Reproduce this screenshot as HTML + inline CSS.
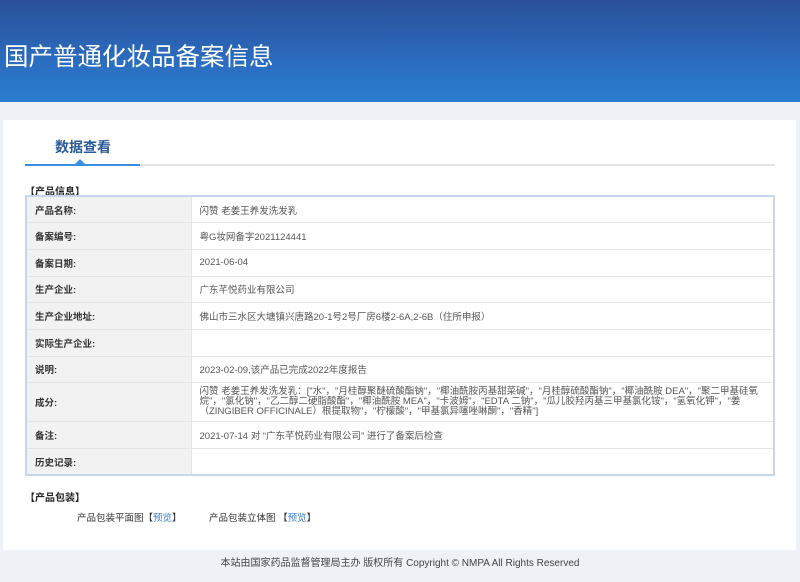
<!DOCTYPE html>
<html><head><meta charset="utf-8"><style>
*{margin:0;padding:0;box-sizing:border-box}
body{width:800px;height:582px;background:#eef2f6;font-family:"Liberation Sans","Noto Sans CJK SC",sans-serif;position:relative;overflow:hidden;color:#333}
.hd{position:absolute;left:0;top:0;width:800px;height:102px;background:linear-gradient(#2a4f97,#2b6cbf 60%,#2a7ccd);border-bottom:2px solid #2b7fd3}
.hd h1{position:absolute;left:4px;top:38px;font-size:24.5px;font-weight:normal;color:#fff}
.card{position:absolute;left:3px;top:120px;width:793px;height:430px;background:#fff}
.tab{position:absolute;left:55px;top:137px;font-size:14px;font-weight:bold;color:#2a5a9a}
.l1{position:absolute;left:25px;top:164px;width:750px;height:2px;background:#e3e3e3}
.l2{position:absolute;left:25px;top:164px;width:115px;height:2px;background:#3a8ee0}
.tri{position:absolute;left:75px;top:159px;width:0;height:0;border-left:5px solid transparent;border-right:5px solid transparent;border-bottom:5px solid #3a8ee0}
.sec{position:absolute;font-size:10px;font-weight:bold;color:#222}
table{position:absolute;left:25px;top:195px;width:750px;border-collapse:collapse;border:2px solid #c6d6ec;font-size:9.5px}
td{border-bottom:1px solid #e4e4e4;padding:0 8px;height:26.7px}
td.k{width:165px;background:#f2f2f2;font-weight:bold;color:#333;border-right:1px solid #e4e4e4}
td.v{color:#555}
.ft{position:absolute;top:554px;left:0;width:800px;text-align:center;font-size:10px;color:#444}
.pk{position:absolute;top:510px;font-size:9.5px;color:#333}
.pk a{color:#3a7fd0;text-decoration:none}
</style></head><body>
<div class="hd"><h1>国产普通化妆品备案信息</h1></div>
<div class="card"></div>
<div class="tab">数据查看</div>
<div class="l1"></div><div class="l2"></div><div class="tri"></div>
<div class="sec" style="left:25px;top:183px">【产品信息】</div>
<table>
<tr><td class="k">产品名称:</td><td class="v">闪赞 老姜王养发洗发乳</td></tr>
<tr><td class="k">备案编号:</td><td class="v">粤G妆网备字2021124441</td></tr>
<tr><td class="k">备案日期:</td><td class="v">2021-06-04</td></tr>
<tr><td class="k">生产企业:</td><td class="v">广东芊悦药业有限公司</td></tr>
<tr><td class="k">生产企业地址:</td><td class="v">佛山市三水区大塘镇兴唐路20-1号2号厂房6楼2-6A,2-6B（住所申报）</td></tr>
<tr><td class="k">实际生产企业:</td><td class="v"></td></tr>
<tr><td class="k">说明:</td><td class="v">2023-02-09,该产品已完成2022年度报告</td></tr>
<tr><td class="k" style="height:39px">成分:</td><td class="v" style="line-height:10px;font-size:9.5px">闪赞 老姜王养发洗发乳：["水"，"月桂醇聚醚硫酸酯钠"，"椰油酰胺丙基甜菜碱"，"月桂醇硫酸酯钠"，"椰油酰胺 DEA"，"聚二甲基硅氧烷"，"氯化钠"，"乙二醇二硬脂酸酯"，"椰油酰胺 MEA"，"卡波姆"，"EDTA 二钠"，"瓜儿胶羟丙基三甲基氯化铵"，"氢氧化钾"，"姜（ZINGIBER OFFICINALE）根提取物"，"柠檬酸"，"甲基氯异噻唑啉酮"，"香精"]</td></tr>
<tr><td class="k">备注:</td><td class="v">2021-07-14 对 “广东芊悦药业有限公司” 进行了备案后检查</td></tr>
<tr><td class="k" style="border-bottom:none">历史记录:</td><td class="v" style="border-bottom:none"></td></tr>
</table>
<div class="sec" style="left:25px;top:489px">【产品包装】</div>
<div class="pk" style="left:77px">产品包装平面图【<a>预览</a>】</div>
<div class="pk" style="left:209px">产品包装立体图 【<a>预览</a>】</div>
<div class="ft">本站由国家药品监督管理局主办 版权所有 Copyright © NMPA All Rights Reserved</div>
</body></html>
